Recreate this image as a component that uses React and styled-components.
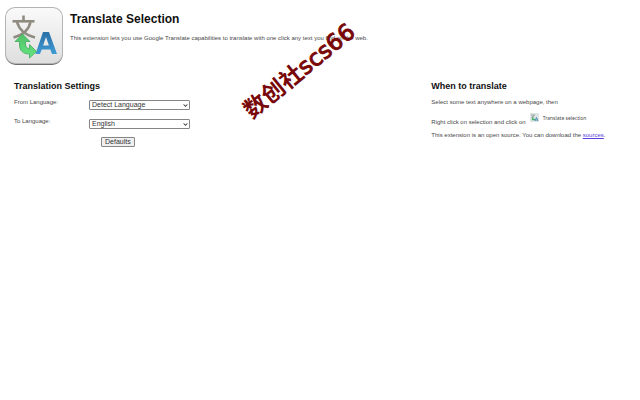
import React from "react";
import { useState } from "react";
import styled, { createGlobalStyle } from "styled-components";
import { FaChevronDown } from "react-icons/fa";

const LogoArt = () => (
  <svg viewBox="0 0 64 64" width="100%" height="100%" aria-hidden="true">
    <defs>
      <linearGradient id="tile" x1="0" y1="0" x2="0" y2="1">
        <stop offset="0" stopColor="#fafafa" />
        <stop offset="1" stopColor="#dedede" />
      </linearGradient>
      <linearGradient id="arrow" x1="0" y1="0" x2="0" y2="1">
        <stop offset="0" stopColor="#4fbf66" />
        <stop offset="1" stopColor="#66e681" />
      </linearGradient>
      <linearGradient id="letter" x1="0" y1="0" x2="0" y2="1">
        <stop offset="0" stopColor="#2a6fa5" />
        <stop offset="1" stopColor="#3f9bd6" />
      </linearGradient>
    </defs>
    <rect x="3.5" y="4.5" width="57" height="56.500" rx="10" fill="#6f6f6f" />
    <rect x="3" y="3" width="58" height="57" rx="10" fill="#b4b4b4" />
    <rect x="4" y="4" width="56" height="55" rx="9" fill="url(#tile)" />
    <g fill="none" stroke="#8f8b80" strokeWidth="2.6">
      <path d="M21.500 11.500 V17" />
      <path d="M10.500 17.300 H32.500" />
      <path d="M28.500 18 C27 25 21 31 11.500 33.500" />
      <path d="M15 18 C17 25 23 31 33 33.500" />
    </g>
    {/* letter A */}
    <path
      d="M41 28 H47 L55 50 H50 L48.300 45.500 H39.700 L38 50 H33.500 Z M44 33 L41.100 41.600 H46.900 Z"
      fill="url(#letter)"
      fillRule="evenodd"
    />
    <path
      d="M20.500 30 L28 37.500 H23.500 V40 C23.500 43 25 44.500 27.500 44.500 V40.500 L34.500 47.500 L27.500 54 V50 C21 50 17.500 46.500 17.500 41 V37.500 H13 Z"
      fill="url(#arrow)"
      stroke="#3fa957"
      strokeWidth=".8"
      strokeLinejoin="round"
    />
  </svg>
);

const MiniArt = () => (
  <svg viewBox="0 0 9 9" width="9" height="9" aria-hidden="true">
    <rect width="9" height="9" rx="1" fill="#dfe5e4" />
    <path d="M1 2 H5 M4.500 2 L1.500 5 M2 2.500 L4 5" stroke="#8d9b94" strokeWidth=".8" fill="none" />
    <path d="M2.500 4.500 V6.500 H5" stroke="#46b36a" strokeWidth="1.300" fill="none" />
    <path d="M5 8 L6.500 4.500 L8 8 M5.500 7 H7.500" stroke="#4388b5" strokeWidth=".9" fill="none" />
  </svg>
);

const LanguageField = ({ id, label, value, options, onChange }) => {
  return (
    <Field>
      <label htmlFor={id}>{label}</label>
      <SelectBox>
        <select id={id} value={value} onChange={(e) => onChange(e.target.value)}>
          {options.map((option) => (
            <option key={option}>{option}</option>
          ))}
        </select>
        <FaChevronDown className="arrow" />
      </SelectBox>
    </Field>
  );
};

const App = () => {
  const [from, setFrom] = useState("Detect Language");
  const [to, setTo] = useState("English");

  const resetDefaults = () => {
    setFrom("Detect Language");
    setTo("English");
  };

  return (
    <>
      <GlobalStyle />
      <Header>
        <Logo>
          <LogoArt />
        </Logo>
        <div>
          <Title>Translate Selection</Title>
          <p>
            This extension lets you use Google Translate capabilities to translate
            with one click any text you find on the web.
          </p>
        </div>
        <Watermark>
          数创社<span>scs66</span>
        </Watermark>
      </Header>
      <Columns>
        <section>
          <Heading>Translation Settings</Heading>
          <LanguageField
            id="from"
            label="From Language:"
            value={from}
            options={["Detect Language", "English", "French", "Spanish"]}
            onChange={setFrom}
          />
          <LanguageField
            id="to"
            label="To Language:"
            value={to}
            options={["English", "French", "Spanish"]}
            onChange={setTo}
          />
          <DefaultsButton onClick={resetDefaults}>Defaults</DefaultsButton>
        </section>
        <section>
          <Heading>When to translate</Heading>
          <Note>Select some text anywhere on a webpage, then</Note>
          <MenuNote>
            Right click on selection and click on
            <MenuItem>
              <MiniArt />
              Translate selection
            </MenuItem>
          </MenuNote>
          <Note>
            This extension is an open source. You can download the{" "}
            <a href="#sources">sources</a>.
          </Note>
        </section>
      </Columns>
    </>
  );
};

const GlobalStyle = createGlobalStyle`
  body {
    margin: 0;
    background: #fff;
    color: #484848;
    font: 6px/8px "Liberation Sans", Arial, sans-serif;
  }
  p, h1, h2 {
    margin: 0;
  }
  a {
    color: #5a3fe0;
  }
`;

const Header = styled.header`
  position: relative;
  display: flex;
  gap: 4px;
  padding: 4px 0 0 2px;
`;

const Logo = styled.div`
  width: 64px;
  height: 64px;
`;

const Title = styled.h1`
  margin: 8px 0;
  color: #111;
  font-size: 12px;
  line-height: 14px;
`;

const Watermark = styled.span`
  position: absolute;
  left: 231px;
  top: 55px;
  color: #780808;
  font: bold 23px/28px "Noto Sans CJK SC", sans-serif;
  white-space: nowrap;
  transform: rotate(-39deg);

  span {
    font-family: "DejaVu Sans", sans-serif;
    font-weight: normal;
    -webkit-text-stroke: 1px #780808;
  }
`;

const Columns = styled.main`
  display: grid;
  grid-template-columns: 2fr 1fr;
  padding: 12px 0 0 14px;
`;

const Heading = styled.h2`
  margin-bottom: 6px;
  color: #111;
  font-size: 9px;
  line-height: 12px;
`;

const Field = styled.div`
  display: flex;
  gap: 4px;
  height: 19px;

  label {
    width: 71px;
  }
`;

const SelectBox = styled.div`
  position: relative;
  width: 101px;
  height: 10px;
  margin-top: 2px;

  select {
    display: block;
    width: 100%;
    height: 100%;
    padding: 0 2px;
    appearance: none;
    border: 1px solid #858585;
    border-radius: 1px;
    background: #fff;
    color: #333;
    font: 7px/8px "Liberation Sans", Arial, sans-serif;
  }

  .arrow {
    position: absolute;
    right: 2px;
    top: 3px;
    width: 5px;
    height: 5px;
    color: #222;
    pointer-events: none;
  }
`;

const DefaultsButton = styled.button`
  display: block;
  margin: 1px 0 0 87px;
  padding: 0 3px;
  border: 1px solid #858585;
  border-radius: 1px;
  background: #efefef;
  color: #333;
  font: 7px/8px "Liberation Sans", Arial, sans-serif;
`;

const Note = styled.p`
  margin-bottom: 5px;
`;

const MenuNote = styled(Note)`
  display: flex;
  align-items: flex-end;
  gap: 4px;
  height: 15px;
`;

const MenuItem = styled.span`
  display: flex;
  align-items: center;
  gap: 4px;
  margin-bottom: 4px;
  font-family: "Noto Sans", sans-serif;
  font-size: 5px;
`;

export default App;
